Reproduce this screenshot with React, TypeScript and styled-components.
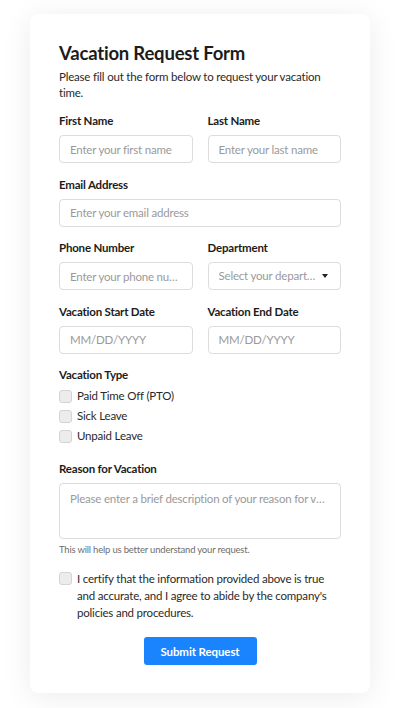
import styled, { createGlobalStyle } from 'styled-components';

const GlobalStyle = createGlobalStyle`
html, body {
    margin: 0;
    padding: 0;
    background: #ffffff;
}
* {
    box-sizing: border-box;
}
`;

const Page = styled.div`
display: flex;
justify-content: center;
padding: 14px 30px 15px;
font-family: Lato, 'Noto Sans', sans-serif;
letter-spacing: -0.2px;
color: #222;
`;

const Card = styled.form`
width: 340px;
padding: 27px 29px 28px;
background: #fff;
border-radius: 8px;
box-shadow: 0 4px 30px rgba(0, 0, 0, 0.08);
`;

const Title = styled.h1`
margin: 0 0 4px;
font-size: 18.5px;
line-height: 24px;
font-weight: 700;
color: #1c1c1c;
`;

const Intro = styled.p`
margin: 0 0 12px;
font-size: 11.5px;
line-height: 16px;
color: #2a2a2a;
`;

const Row = styled.div`
display: grid;
grid-template-columns: 1fr 1fr;
column-gap: 15px;
`;

const Field = styled.div`
display: flex;
flex-direction: column;
gap: 6px;
margin-bottom: 13.5px;
min-width: 0;
`;

const Label = styled.label`
font-size: 11.5px;
line-height: 16px;
font-weight: 700;
color: #1c1c1c;
`;

const Input = styled.input`
width: 100%;
height: 28px;
padding: 0 10px;
border: 1px solid #dcdcdc;
border-radius: 4px;
font-family: inherit;
font-size: 11.5px;
letter-spacing: -0.2px;
color: #222;
background: #fff;
text-overflow: ellipsis;
&::placeholder {
    color: #9a9a9a;
}
`;

const FakeBox = styled.div<{ $tall?: boolean }>`
display: flex;
align-items: ${p => p.$tall ? 'flex-start' : 'center'};
justify-content: space-between;
gap: 6px;
height: ${p => p.$tall ? '56px' : '28px'};
padding: ${p => p.$tall ? '7px 10px' : '0 12px 0 10px'};
border: 1px solid #dcdcdc;
border-radius: 4px;
font-size: 11.5px;
line-height: 16px;
color: #9a9a9a;
`;

const Placeholder = styled.span`
overflow: hidden;
white-space: nowrap;
text-overflow: ellipsis;
`;

const Caret = styled.span`
flex: none;
width: 0;
height: 0;
border-left: 3.5px solid transparent;
border-right: 3.5px solid transparent;
border-top: 4px solid #222;
`;

const CheckList = styled.div`
display: flex;
flex-direction: column;
margin: -3px 0 1px;
`;

const CheckRow = styled.label<{ $multiline?: boolean }>`
display: flex;
align-items: ${p => p.$multiline ? 'flex-start' : 'center'};
gap: 5px;
min-height: 20px;
font-size: 11.5px;
line-height: ${p => p.$multiline ? '17px' : '20px'};
color: #2a2a2a;
`;

const Box = styled.span<{ $multiline?: boolean }>`
flex: none;
width: 13px;
height: 13px;
margin-top: ${p => p.$multiline ? '2px' : '0'};
border: 1px solid #d4d4d4;
border-radius: 3px;
background: #ececec;
`;

const Hint = styled.div`
margin-top: -2px;
font-size: 9.5px;
line-height: 14px;
color: #6e6e6e;
`;

const Agreement = styled.div`
margin-bottom: 16px;
`;

const Actions = styled.div`
display: flex;
justify-content: center;
`;

const Submit = styled.button`
width: 113px;
height: 28px;
border: none;
border-radius: 3px;
background: #1a84ff;
color: #fff;
font-family: inherit;
font-size: 11.5px;
font-weight: 700;
letter-spacing: -0.1px;
`;

export default function App() {
    const types = ['Paid Time Off (PTO)', 'Sick Leave', 'Unpaid Leave'];

    return (
        <>
            <GlobalStyle />
            <Page>
                <Card onSubmit={e => e.preventDefault()}>
                    <Title>Vacation Request Form</Title>
                    <Intro>Please fill out the form below to request your vacation time.</Intro>

                    <Row>
                        <Field>
                            <Label>First Name</Label>
                            <Input placeholder="Enter your first name" />
                        </Field>
                        <Field>
                            <Label>Last Name</Label>
                            <Input placeholder="Enter your last name" />
                        </Field>
                    </Row>

                    <Field>
                        <Label>Email Address</Label>
                        <Input placeholder="Enter your email address" />
                    </Field>

                    <Row>
                        <Field>
                            <Label>Phone Number</Label>
                            <Input placeholder="Enter your phone number" />
                        </Field>
                        <Field>
                            <Label>Department</Label>
                            <FakeBox>
                                <Placeholder>Select your department</Placeholder>
                                <Caret />
                            </FakeBox>
                        </Field>
                    </Row>

                    <Row>
                        <Field>
                            <Label>Vacation Start Date</Label>
                            <Input placeholder="MM/DD/YYYY" />
                        </Field>
                        <Field>
                            <Label>Vacation End Date</Label>
                            <Input placeholder="MM/DD/YYYY" />
                        </Field>
                    </Row>

                    <Field>
                        <Label>Vacation Type</Label>
                        <CheckList>
                            {types.map(t => (
                                <CheckRow key={t}>
                                    <Box />
                                    {t}
                                </CheckRow>
                            ))}
                        </CheckList>
                    </Field>

                    <Field>
                        <Label>Reason for Vacation</Label>
                        <FakeBox $tall>
                            <Placeholder>Please enter a brief description of your reason for vacation</Placeholder>
                        </FakeBox>
                        <Hint>This will help us better understand your request.</Hint>
                    </Field>

                    <Agreement>
                        <CheckRow $multiline>
                            <Box $multiline />
                            <span>I certify that the information provided above is true and accurate, and I agree to abide by the company's policies and procedures.</span>
                        </CheckRow>
                    </Agreement>

                    <Actions>
                        <Submit type="submit">Submit Request</Submit>
                    </Actions>
                </Card>
            </Page>
        </>
    );
}
